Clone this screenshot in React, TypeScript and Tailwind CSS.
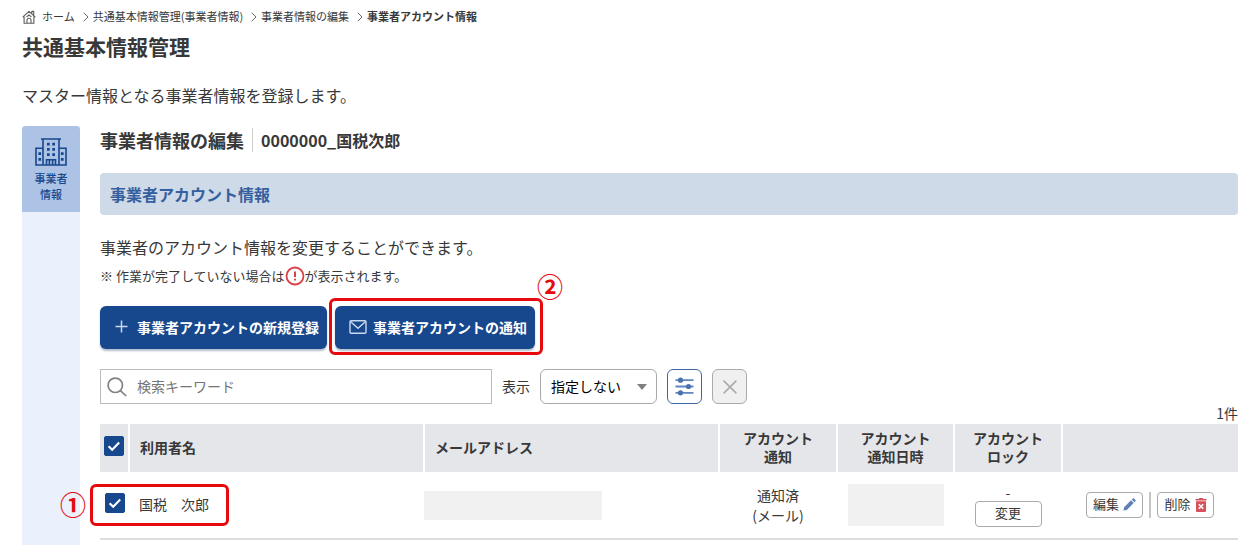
import { useState } from "react";

function HomeIcon() {
  return (
    <svg viewBox="0 0 14 14" className="size-3.5" fill="none" stroke="#5c5c5c" strokeWidth="1.1" strokeLinejoin="round" aria-hidden="true">
      <path d="M0.7 7.2 7 1.4l6.3 5.8M2.1 6.4v6.8h9.8V6.4M9.8 3.4V1.4h1.9v3.8M5 13.2v-3a2 2 0 0 1 4 0v3M4.6 7 7 4.9 9.4 7" />
    </svg>
  );
}

function Chevron() {
  return (
    <svg viewBox="0 0 6 10" className="h-2.5 w-1.5" fill="none" stroke="#666" strokeWidth="1" aria-hidden="true">
      <path d="M0.8 0.8 5 5 0.8 9.2" />
    </svg>
  );
}

function BuildingIcon() {
  return (
    <svg viewBox="0 0 32 28" className="h-7 w-8" fill="none" stroke="#17478d" strokeWidth="1.6" aria-hidden="true">
      <path d="M6 1h20M8 1v26M24 1v26M8 10.2H1V27h30V10.2h-7M11.5 27v-5.2h9V27M14.4 21.8V27M17.6 21.8V27" />
      <g fill="#17478d" stroke="none">
        <path d="M12 4.8h2.7v2.7H12zM17.3 4.8H20v2.7h-2.7zM12 10h2.7v2.7H12zM17.3 10H20v2.7h-2.7zM12 15.2h2.7v2.7H12zM17.3 15.2H20v2.7h-2.7z" />
        <path d="M3.4 14.2h2.7v2.7H3.4zM3.4 20h2.7v2.7H3.4zM25.9 14.2h2.7v2.7h-2.7zM25.9 20h2.7v2.7h-2.7z" />
      </g>
    </svg>
  );
}

function AlertIcon() {
  return (
    <svg viewBox="0 0 20 20" className="size-5" fill="none" stroke="#dc4049" aria-hidden="true">
      <circle cx="10" cy="10" r="8.5" strokeWidth="1.8" />
      <path d="M10 5.4v5.6M10 12.8v1.8" strokeWidth="2" />
    </svg>
  );
}

function PlusIcon() {
  return (
    <svg viewBox="0 0 13 13" className="size-[13px]" fill="none" stroke="#c9d8ee" strokeWidth="1.5" aria-hidden="true">
      <path d="M6.5 0.5v12M0.5 6.5h12" />
    </svg>
  );
}

function MailIcon() {
  return (
    <svg viewBox="0 0 18 14" className="h-3.5 w-[18px]" fill="none" stroke="#c9d8ee" strokeWidth="1.4" aria-hidden="true">
      <rect x="1" y="0.8" width="16" height="12.4" rx="1" />
      <path d="M1.4 1.4 9 8.2l7.6-6.8" />
    </svg>
  );
}

function SearchIcon() {
  return (
    <svg viewBox="0 0 20 20" className="absolute left-[7px] size-5" fill="none" stroke="#808080" strokeWidth="1.7" aria-hidden="true">
      <circle cx="8.3" cy="8.3" r="7.2" />
      <path d="m13.4 13.6 5.8 5.4" />
    </svg>
  );
}

function SlidersIcon() {
  return (
    <svg viewBox="0 0 19 19" className="size-[19px]" fill="none" stroke="#5f86bf" strokeWidth="1.8" aria-hidden="true">
      <path d="M0.5 3.2h18M0.5 9.5h18M0.5 15.8h18" />
      <g stroke="none" fill="#4c72ad">
        <circle cx="5.5" cy="3.2" r="2.6" />
        <circle cx="13.5" cy="9.5" r="2.6" />
        <circle cx="5.5" cy="15.8" r="2.6" />
      </g>
    </svg>
  );
}

function CrossIcon() {
  return (
    <svg viewBox="0 0 14 14" className="size-3.5" fill="none" stroke="#aaa" strokeWidth="1.5" aria-hidden="true">
      <path d="M0.6 0.6 13.4 13.4M13.4 0.6 0.6 13.4" />
    </svg>
  );
}

function PencilIcon() {
  return (
    <svg viewBox="0 0 13 13" className="size-[13px]" fill="#5f82b4" aria-hidden="true">
      <path d="M0.4 12.6 1.1 9.2 8 2.3l2.7 2.7-6.9 6.9zM8.7 1.6 9.9.5q.6-.5 1.2 0l1.4 1.4q.6.6 0 1.2l-1.1 1.2z" />
    </svg>
  );
}

function TrashIcon() {
  return (
    <svg viewBox="0 0 12 14" className="h-3.5 w-3" aria-hidden="true">
      <path fill="#d5525b" d="M0.5 1h3.2L4.3 0h3.4l.6 1h3.2v1.4H.5zM1 3.2h10V13q0 1-1 1H2q-1 0-1-1z" />
      <path stroke="#fff" strokeWidth="1.6" d="m3.8 6.2 4.4 4.6M8.2 6.2l-4.4 4.6" />
    </svg>
  );
}

function Checkbox({ label, checked, onChange }: { label: string; checked: boolean; onChange: (value: boolean) => void }) {
  return (
    <span className="relative mx-auto flex size-5">
      <input
        type="checkbox"
        aria-label={label}
        checked={checked}
        onChange={(event) => onChange(event.target.checked)}
        className="size-5 appearance-none rounded-xs border border-[#17478d] bg-white checked:bg-[#17478d]"
      />
      {checked && (
        <svg viewBox="0 0 20 20" className="pointer-events-none absolute inset-0 size-5" fill="none" stroke="#fff" strokeWidth="2.1" aria-hidden="true">
          <path d="m4.6 10.2 3.6 3.6 7-7.2" />
        </svg>
      )}
    </span>
  );
}

const crumbs = ["共通基本情報管理(事業者情報)", "事業者情報の編集"];
const headCell = "border-l-2 border-white bg-[#e4e6ea] px-0 pt-0 pb-0.5 font-bold leading-[18px]";
const smallButton = "h-[26px] rounded border border-[#aaa] bg-white pb-px text-[13px]";
const primaryButton =
  "flex h-[43px] items-center rounded-md bg-[#17478d] pr-2 pb-0.5 text-sm font-bold text-white shadow-[0_2px_2px_#b4bfcd]";

export default function App() {
  const [selected, setSelected] = useState(true);
  const [keyword, setKeyword] = useState("");

  return (
    <div className="flex min-h-screen flex-col bg-white pr-[21px] pl-[22px] font-['Noto_Sans_CJK_JP',sans-serif] text-sm text-[#383838]">
      <nav aria-label="パンくず" className="mt-2 flex h-[18px] items-center text-[11px]">
        <a href="#home" className="flex items-center gap-1.5">
          <HomeIcon />
          ホーム
        </a>
        {crumbs.map((crumb) => (
          <span key={crumb} className="ml-2 flex items-center gap-1">
            <Chevron />
            <a href="#crumb">{crumb}</a>
          </span>
        ))}
        <span className="ml-2 flex items-center gap-1">
          <Chevron />
          <b>事業者アカウント情報</b>
        </span>
      </nav>
      <h1 className="mt-1.5 text-[21px] leading-7 font-bold">共通基本情報管理</h1>
      <p className="mt-[23px] text-base leading-6">マスター情報となる事業者情報を登録します。</p>

      <div className="mt-[19px] flex flex-1 gap-5">
        <aside className="w-[58px] shrink-0 bg-[#eaf1fd]">
          <a
            href="#business"
            className="flex h-[86px] flex-col items-center rounded-t-sm bg-[#adc3e6] pt-3 text-center text-[11px] leading-4 font-medium text-[#17478d]"
          >
            <BuildingIcon />
            <span className="mt-1">
              事業者
              <br />
              情報
            </span>
          </a>
        </aside>

        <main className="min-w-0 flex-1">
          <div className="flex h-7 items-center">
            <h2 className="text-lg font-bold">事業者情報の編集</h2>
            <span className="ml-2 flex h-6 items-center border-l border-[#ccc] pl-2 text-base font-bold">0000000_国税次郎</span>
          </div>
          <h3 className="mt-[19px] flex h-[42px] items-center rounded bg-[#cfdae8] px-2.5 text-base font-bold text-[#35609f]">
            事業者アカウント情報
          </h3>
          <p className="mt-5 text-base leading-6">事業者のアカウント情報を変更することができます。</p>
          <p className="mt-[7px] flex h-5 items-center text-[13px]">
            ※ 作業が完了していない場合は
            <AlertIcon />
            が表示されます。
          </p>

          <div className="mt-5 flex gap-2">
            <button type="button" className={`${primaryButton} gap-[9px] pl-[15px]`}>
              <PlusIcon />
              事業者アカウントの新規登録
            </button>
            <div className="relative">
              <button type="button" className={`${primaryButton} gap-1.5 pl-3.5`}>
                <MailIcon />
                事業者アカウントの通知
              </button>
              <span className="pointer-events-none absolute -top-2 -right-2 -bottom-1.5 -left-1.5 rounded-md border-3 border-[#e60a0f]" />
              <span className="absolute -top-[34px] -right-7 text-[26px] leading-7 font-bold text-[#e60a0f]">②</span>
            </div>
          </div>

          <div className="mt-5 flex h-[35px] items-center">
            <div className="relative flex h-full w-full max-w-[392px] items-center">
              <SearchIcon />
              <input
                type="search"
                aria-label="検索キーワード"
                placeholder="検索キーワード"
                value={keyword}
                onChange={(event) => setKeyword(event.target.value)}
                className="h-full w-full border border-[#bbb] pb-0.5 pl-9 text-sm placeholder:text-[#757575]"
              />
            </div>
            <label htmlFor="display" className="mr-2.5 ml-2.5 shrink-0 pb-0.5">
              表示
            </label>
            <div className="relative flex h-full w-[117px] shrink-0 items-center">
              <select id="display" className="h-full w-full appearance-none rounded-md border border-[#aaa] bg-white pb-0.5 pl-2.5 text-sm text-black">
                <option>指定しない</option>
              </select>
              <svg viewBox="0 0 10 6" className="pointer-events-none absolute right-2.5 h-1.5 w-2.5" fill="#808080" aria-hidden="true">
                <path d="M0 0h10L5 6z" />
              </svg>
            </div>
            <button
              type="button"
              aria-label="絞り込み"
              className="ml-2.5 flex size-[35px] shrink-0 items-center justify-center rounded-md border border-[#3f66a3] bg-white"
            >
              <SlidersIcon />
            </button>
            <button
              type="button"
              aria-label="クリア"
              onClick={() => setKeyword("")}
              className="ml-2.5 flex size-[35px] shrink-0 items-center justify-center rounded-md border border-[#aaa] bg-[#f0f0f0]"
            >
              <CrossIcon />
            </button>
          </div>

          <p className="pb-0.5 text-right leading-[18px]">1件</p>

          <table className="w-full table-fixed border-collapse text-sm">
            <colgroup>
              <col className="w-[29px]" />
              <col />
              <col />
              <col className="w-[118px]" />
              <col className="w-[117px]" />
              <col className="w-[108px]" />
              <col className="w-[176px]" />
            </colgroup>
            <thead>
              <tr className="h-12">
                <th className="bg-[#e4e6ea] p-0 pb-1">
                  <Checkbox label="すべて選択" checked={selected} onChange={setSelected} />
                </th>
                <th className={`${headCell} text-left`}>
                  <span className="pl-2.5">利用者名</span>
                </th>
                <th className={`${headCell} text-left`}>
                  <span className="pl-2.5">メールアドレス</span>
                </th>
                <th className={headCell}>
                  アカウント
                  <br />
                  通知
                </th>
                <th className={headCell}>
                  アカウント
                  <br />
                  通知日時
                </th>
                <th className={headCell}>
                  アカウント
                  <br />
                  ロック
                </th>
                <th className={headCell} aria-label="操作" />
              </tr>
            </thead>
            <tbody>
              <tr className="h-[67px] border-b-2 border-[#ddd]">
                <td className="relative p-0 pb-1">
                  <Checkbox label="国税 次郎を選択" checked={selected} onChange={setSelected} />
                  <span className="pointer-events-none absolute top-3 -left-2.5 h-[42px] w-[139px] rounded-md border-3 border-[#e60a0f]" />
                  <span className="absolute top-[18px] -left-10 text-[26px] leading-7 font-bold text-[#e60a0f]">①</span>
                </td>
                <td className="p-0 pb-0.5 pl-2.5">国税　次郎</td>
                <td className="p-0">
                  <div className="h-[29px] w-[178px] bg-[#f1f1f1]" />
                </td>
                <td className="p-0 text-center leading-5">
                  通知済
                  <br />
                  (メール)
                </td>
                <td className="p-0">
                  <div className="mx-auto h-[42px] w-24 bg-[#f1f1f1]" />
                </td>
                <td className="p-0 text-center">
                  <div className="leading-[18px]">-</div>
                  <button type="button" className={`${smallButton} w-[67px]`}>
                    変更
                  </button>
                </td>
                <td className="p-0">
                  <div className="flex items-center justify-center gap-1.5">
                    <button type="button" className={`${smallButton} flex w-[57px] items-center justify-center gap-1`}>
                      編集
                      <PencilIcon />
                    </button>
                    <span className="h-[26px] w-0.5 bg-[#c4c4c4]" />
                    <button type="button" className={`${smallButton} flex w-[57px] items-center justify-center gap-1`}>
                      削除
                      <TrashIcon />
                    </button>
                  </div>
                </td>
              </tr>
            </tbody>
          </table>
        </main>
      </div>
    </div>
  );
}
